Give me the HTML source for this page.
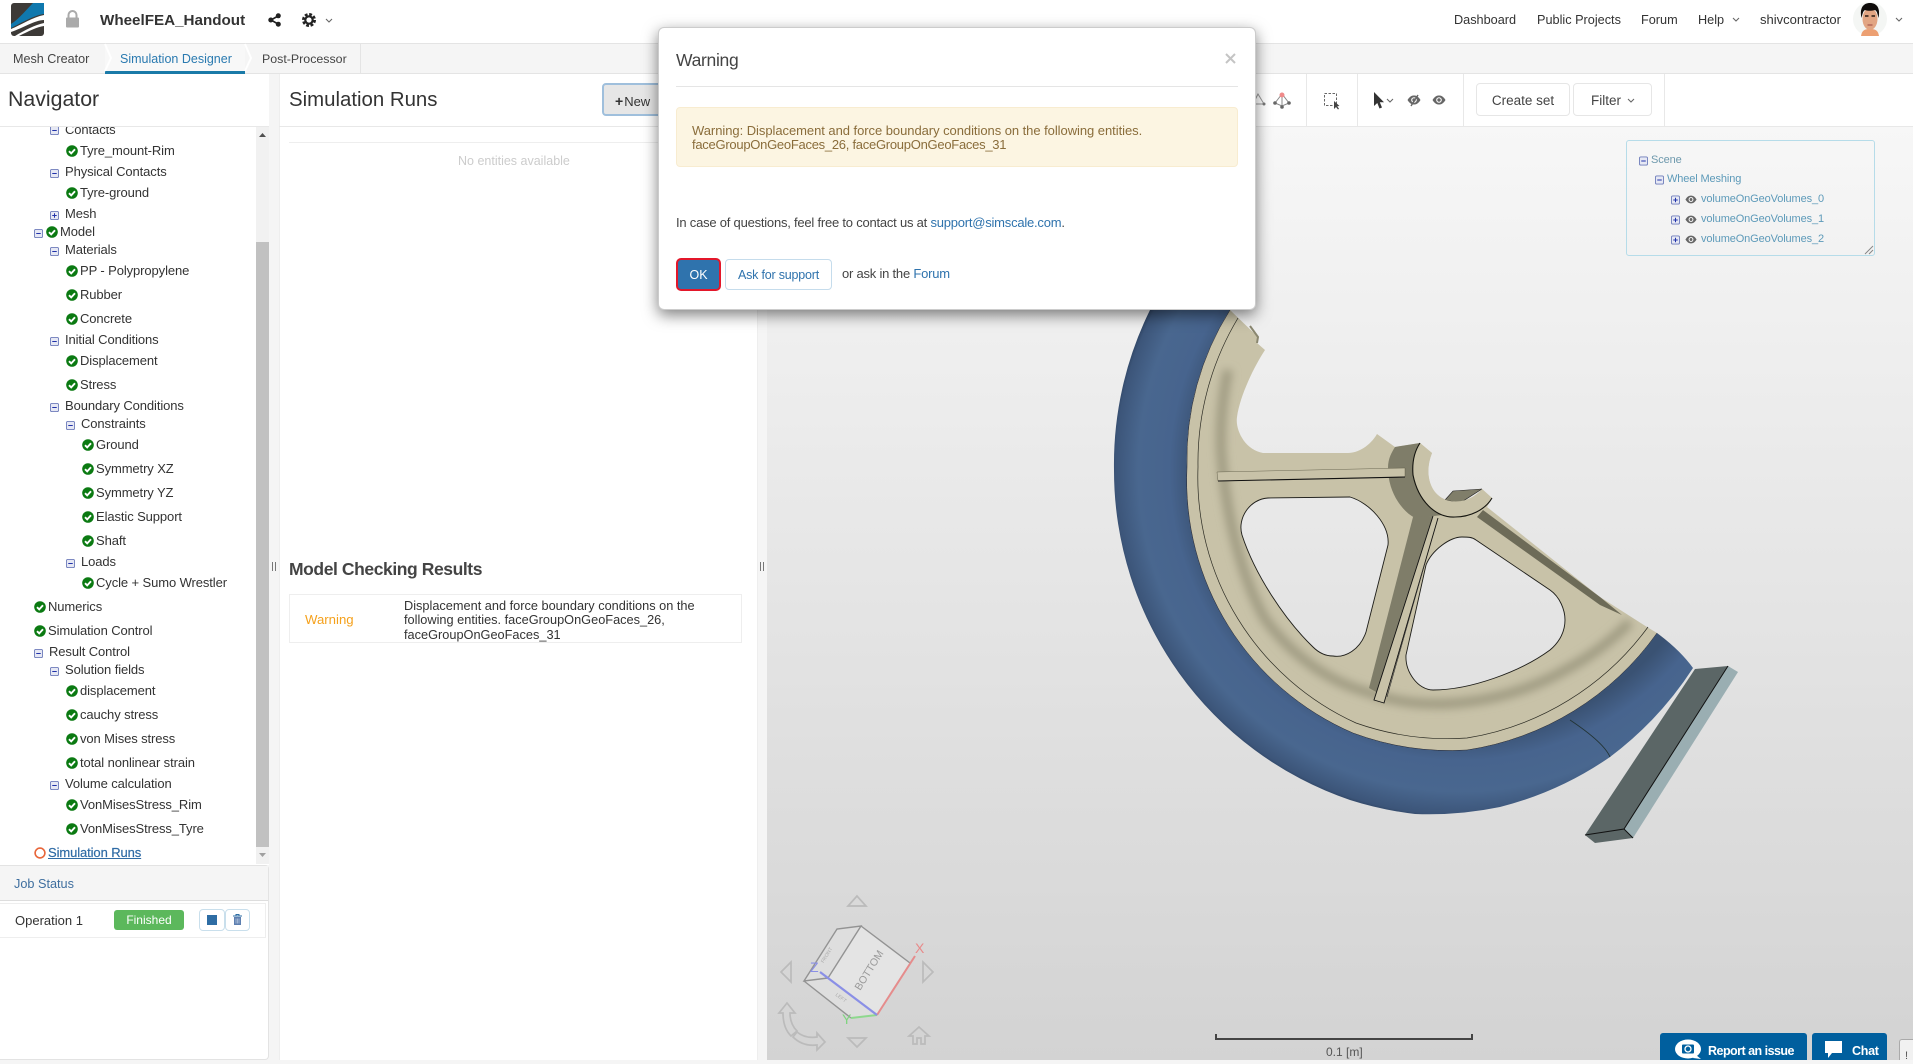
<!DOCTYPE html>
<html><head><meta charset="utf-8"><title>WheelFEA_Handout</title>
<style>
*{box-sizing:border-box}
html,body{margin:0;padding:0;width:1913px;height:1060px;overflow:hidden;background:#f5f5f5;font-family:"Liberation Sans",sans-serif;color:#333}
.b{position:absolute}
.t{position:absolute;white-space:nowrap;font-size:13.3px;line-height:16px;height:16px;margin-top:1px}
.tree .t{margin-top:0;font-size:13px;letter-spacing:-.1px}
.n{font-size:12.7px}
.m{font-size:13px;letter-spacing:-.22px}
.sc{font-size:11px;letter-spacing:-.12px}
a{color:#2f73ad;text-decoration:none}
svg.i{position:absolute;display:block;overflow:visible}
.bt{position:absolute;background:#fff;border:1px solid #e6e6e6;border-radius:4px;font-size:13.5px;text-align:center;line-height:33px;color:#444}
</style></head><body>
<svg width="0" height="0" style="position:absolute"><defs>
<symbol id="c" viewBox="0 0 12 12"><circle cx="6" cy="6" r="5.8" fill="#0b7a12"/><path d="M3 6.2 5.2 8.4 9 4.2" fill="none" stroke="#fff" stroke-width="1.9"/></symbol>
<symbol id="mn" viewBox="0 0 10 10"><rect x=".5" y=".5" width="9" height="9" rx="1.5" fill="#e6e8f4" stroke="#6f7dbb"/><path d="M2.5 5h5" stroke="#2233aa" stroke-width="1.1"/></symbol>
<symbol id="pl" viewBox="0 0 10 10"><rect x=".5" y=".5" width="9" height="9" rx="1.5" fill="#e6e8f4" stroke="#6f7dbb"/><path d="M2.5 5h5M5 2.5v5" stroke="#2233aa" stroke-width="1.1"/></symbol>
<symbol id="ch" viewBox="0 0 8 5"><path d="M1 1 4 4 7 1" fill="none" stroke="#666" stroke-width="1.1"/></symbol>
<symbol id="ey" viewBox="0 0 14 10"><path d="M.5 5C3 1 5 .5 7 .5S11 1 13.5 5C11 9 9 9.500 7 9.500S3 9 .5 5Z" fill="#666"/><circle cx="7" cy="5" r="2.800" fill="#fff"/><circle cx="7" cy="5" r="1.700" fill="#666"/></symbol>
<radialGradient id="ty" gradientUnits="userSpaceOnUse" cx="1460" cy="470" r="350"><stop offset=".76" stop-color="#3a5273"/><stop offset=".83" stop-color="#47648e"/><stop offset=".92" stop-color="#49678f"/><stop offset=".985" stop-color="#3c5579"/><stop offset="1" stop-color="#2d4260"/></radialGradient>
<clipPath id="rc"><path clip-rule="evenodd" d="M1230 310A280 280 0 0 0 1187 467A275 275 0 0 0 1353 733A280 280 0 0 0 1467 750A285 285 0 0 0 1657 633L1647 627 1600 597 1487 507 1492 498 1482 489C1470 503 1452 504 1442 498 1428 490 1425 470 1432 453L1420 443 1395 447 1377 434C1370 446 1358 453 1348 453L1263 453C1245 450 1235 430 1237 417 1240 395 1255 365 1265 350L1257 343 1258 337ZM1268 498L1350 497C1370 503 1390 525 1388 545L1366 632C1360 650 1345 658 1333 656 1325 656 1318 652 1313 647 1285 620 1255 575 1242 535 1237 518 1250 499 1268 498ZM1462 537C1468 537 1472 537 1476 540L1550 590C1560 597 1565 610 1565 620 1565 635 1556 645 1550 650 1520 672 1470 690 1433 690 1418 690 1405 672 1406 655L1426 565C1432 550 1450 537 1462 537Z"/></clipPath>
<filter id="bl" x="-20%" y="-20%" width="140%" height="140%"><feGaussianBlur stdDeviation="4.500"/></filter>
</defs></svg>

<!-- top bar -->
<div class="b" style="left:0;top:0;width:1913px;height:44px;background:#fff;border-bottom:1px solid #e4e4e4"></div>
<svg class="i" style="left:11px;top:3px" width="34" height="33" viewBox="0 0 34 33"><rect width="33" height="33" rx="3" fill="#3d3a37"/><path d="M33 0H22C14 8 8 16 0 21V25C12 19 24 12 33 11Z" fill="#0f78ae"/><path d="M33 12C22 14 10 22 0 26V29C12 25 24 17 33 17Z" fill="#fff"/><path d="M33 20C24 22 14 27 4 33H8C18 28 26 24 33 23Z" fill="#fff"/></svg>
<svg class="i" style="left:65px;top:10px" width="15" height="18" viewBox="0 0 15 18"><path d="M3.500 8V5a4 4 0 0 1 8 0v3" fill="none" stroke="#aaa" stroke-width="2"/><rect x="1" y="7.500" width="13" height="10" rx="1" fill="#aaa"/></svg>
<div class="t" style="left:100px;top:12px;font-size:15.2px;font-weight:bold;color:#333">WheelFEA_Handout</div>
<svg class="i" style="left:268px;top:13px" width="13" height="14" viewBox="0 0 13 14"><path d="M10 3 3 7l7 4" fill="none" stroke="#222" stroke-width="1.600"/><circle cx="10.300" cy="2.800" r="2.500" fill="#222"/><circle cx="2.800" cy="7" r="2.500" fill="#222"/><circle cx="10.300" cy="11.200" r="2.500" fill="#222"/></svg>
<svg class="i" style="left:302px;top:13px" width="14" height="14" viewBox="0 0 14 14"><circle cx="7" cy="7" r="5.700" fill="none" stroke="#222" stroke-width="2.600" stroke-dasharray="2.800 1.680"/><circle cx="7" cy="7" r="3.700" fill="none" stroke="#222" stroke-width="2.200"/></svg>
<svg class="i" style="left:325px;top:18px" width="8" height="5"><use href="#ch"/></svg>
<div class="t n" style="left:1454px;top:11px">Dashboard</div>
<div class="t n" style="left:1537px;top:11px">Public Projects</div>
<div class="t n" style="left:1641px;top:11px">Forum</div>
<div class="t n" style="left:1698px;top:11px">Help</div>
<svg class="i" style="left:1732px;top:17px" width="8" height="5"><use href="#ch"/></svg>
<div class="t" style="left:1760px;top:11px;font-size:13px">shivcontractor</div>
<svg class="i" style="left:1853px;top:2px" width="34" height="34" viewBox="0 0 34 34"><circle cx="17" cy="17" r="17" fill="#f4f6f4"/><path d="M8 34c1-6 4-7 9-7s8 1 9 7Z" fill="#ec9f72"/><ellipse cx="17" cy="17" rx="7.500" ry="11" fill="#e2a583"/><path d="M8.500 16C6 4 12 1 17 1s11 3 8.500 15c-1-4-1.500-7-3.500-8-4 1-7 1-10 0-2 1-2.500 4-3.500 8Z" fill="#0f0c0b"/><path d="M12 14h3.500M18.500 14h3.500" stroke="#2a1c14" stroke-width="1.500"/><path d="M14.500 23h5" stroke="#a8584c" stroke-width="1.200"/></svg>
<svg class="i" style="left:1895px;top:17px" width="8" height="5"><use href="#ch"/></svg>

<!-- tabs -->
<div class="b" style="left:0;top:44px;width:1913px;height:30px;background:#f5f5f5;border-bottom:1px solid #e4e4e4"></div>
<div class="b" style="left:105px;top:44px;width:140px;height:30px;background:#f8f8f8;border-bottom:3px solid #1a7aa8"></div>
<svg class="i" style="left:100px;top:44px" width="270" height="30" viewBox="0 0 270 30"><path d="M5 0 11 14 5 27" fill="none" stroke="#fff" stroke-width="2"/><path d="M145 0 151 14 145 27" fill="none" stroke="#fff" stroke-width="2"/><path d="M260.500 0V30" stroke="#e4e4e4"/></svg>
<div class="t" style="left:13px;top:50px;font-size:12.6px;color:#444">Mesh Creator</div>
<div class="t" style="left:120px;top:50px;font-size:12.5px;color:#2a7ab0">Simulation Designer</div>
<div class="t" style="left:262px;top:50px;font-size:12.4px;color:#444">Post-Processor</div>

<!-- navigator -->
<div class="b" style="left:0;top:74px;width:269px;height:791px;background:#fff"></div>
<div class="b" style="left:0;top:126px;width:269px;height:1px;background:#e8e8e8"></div>
<div class="t" style="left:8px;top:86px;font-size:21.300px;line-height:24px;height:24px">Navigator</div>
<div class="b" style="left:256px;top:127px;width:13px;height:737px;background:#f1f1f1"></div>
<div class="b" style="left:256px;top:242px;width:13px;height:605px;background:#c1c1c1"></div>
<svg class="i" style="left:256px;top:127px" width="13" height="737" viewBox="0 0 13 737"><path d="M3 10h7L6.500 6Z" fill="#505050"/><path d="M3 726h7l-3.500 4Z" fill="#a0a0a0"/></svg>

<div class="b tree" style="left:0;top:1px;width:256px;height:863px;clip-path:inset(126px 0 0 0)">
<svg class="i" style="left:50px;top:125px" width="9" height="9"><use href="#mn"/></svg><div class="t" style="left:65px;top:121px">Contacts</div>
<svg class="i" style="left:66px;top:144px" width="12" height="12"><use href="#c"/></svg><div class="t" style="left:80px;top:142px">Tyre_mount-Rim</div>
<svg class="i" style="left:50px;top:168px" width="9" height="9"><use href="#mn"/></svg><div class="t" style="left:65px;top:163px">Physical Contacts</div>
<svg class="i" style="left:66px;top:186px" width="12" height="12"><use href="#c"/></svg><div class="t" style="left:80px;top:184px">Tyre-ground</div>
<svg class="i" style="left:50px;top:210px" width="9" height="9"><use href="#pl"/></svg><div class="t" style="left:65px;top:205px">Mesh</div>
<svg class="i" style="left:34px;top:228px" width="9" height="9"><use href="#mn"/></svg><svg class="i" style="left:46px;top:225px" width="12" height="12"><use href="#c"/></svg><div class="t" style="left:60px;top:223px">Model</div>
<svg class="i" style="left:50px;top:246px" width="9" height="9"><use href="#mn"/></svg><div class="t" style="left:65px;top:241px">Materials</div>
<svg class="i" style="left:66px;top:264px" width="12" height="12"><use href="#c"/></svg><div class="t" style="left:80px;top:262px">PP - Polypropylene</div>
<svg class="i" style="left:66px;top:288px" width="12" height="12"><use href="#c"/></svg><div class="t" style="left:80px;top:286px">Rubber</div>
<svg class="i" style="left:66px;top:312px" width="12" height="12"><use href="#c"/></svg><div class="t" style="left:80px;top:310px">Concrete</div>
<svg class="i" style="left:50px;top:336px" width="9" height="9"><use href="#mn"/></svg><div class="t" style="left:65px;top:331px">Initial Conditions</div>
<svg class="i" style="left:66px;top:354px" width="12" height="12"><use href="#c"/></svg><div class="t" style="left:80px;top:352px">Displacement</div>
<svg class="i" style="left:66px;top:378px" width="12" height="12"><use href="#c"/></svg><div class="t" style="left:80px;top:376px">Stress</div>
<svg class="i" style="left:50px;top:402px" width="9" height="9"><use href="#mn"/></svg><div class="t" style="left:65px;top:397px">Boundary Conditions</div>
<svg class="i" style="left:66px;top:420px" width="9" height="9"><use href="#mn"/></svg><div class="t" style="left:81px;top:415px">Constraints</div>
<svg class="i" style="left:82px;top:438px" width="12" height="12"><use href="#c"/></svg><div class="t" style="left:96px;top:436px">Ground</div>
<svg class="i" style="left:82px;top:462px" width="12" height="12"><use href="#c"/></svg><div class="t" style="left:96px;top:460px">Symmetry XZ</div>
<svg class="i" style="left:82px;top:486px" width="12" height="12"><use href="#c"/></svg><div class="t" style="left:96px;top:484px">Symmetry YZ</div>
<svg class="i" style="left:82px;top:510px" width="12" height="12"><use href="#c"/></svg><div class="t" style="left:96px;top:508px">Elastic Support</div>
<svg class="i" style="left:82px;top:534px" width="12" height="12"><use href="#c"/></svg><div class="t" style="left:96px;top:532px">Shaft</div>
<svg class="i" style="left:66px;top:558px" width="9" height="9"><use href="#mn"/></svg><div class="t" style="left:81px;top:553px">Loads</div>
<svg class="i" style="left:82px;top:576px" width="12" height="12"><use href="#c"/></svg><div class="t" style="left:96px;top:574px">Cycle + Sumo Wrestler</div>
<svg class="i" style="left:34px;top:600px" width="12" height="12"><use href="#c"/></svg><div class="t" style="left:48px;top:598px">Numerics</div>
<svg class="i" style="left:34px;top:624px" width="12" height="12"><use href="#c"/></svg><div class="t" style="left:48px;top:622px">Simulation Control</div>
<svg class="i" style="left:34px;top:648px" width="9" height="9"><use href="#mn"/></svg><div class="t" style="left:49px;top:643px">Result Control</div>
<svg class="i" style="left:50px;top:666px" width="9" height="9"><use href="#mn"/></svg><div class="t" style="left:65px;top:661px">Solution fields</div>
<svg class="i" style="left:66px;top:684px" width="12" height="12"><use href="#c"/></svg><div class="t" style="left:80px;top:682px">displacement</div>
<svg class="i" style="left:66px;top:708px" width="12" height="12"><use href="#c"/></svg><div class="t" style="left:80px;top:706px">cauchy stress</div>
<svg class="i" style="left:66px;top:732px" width="12" height="12"><use href="#c"/></svg><div class="t" style="left:80px;top:730px">von Mises stress</div>
<svg class="i" style="left:66px;top:756px" width="12" height="12"><use href="#c"/></svg><div class="t" style="left:80px;top:754px">total nonlinear strain</div>
<svg class="i" style="left:50px;top:780px" width="9" height="9"><use href="#mn"/></svg><div class="t" style="left:65px;top:775px">Volume calculation</div>
<svg class="i" style="left:66px;top:798px" width="12" height="12"><use href="#c"/></svg><div class="t" style="left:80px;top:796px">VonMisesStress_Rim</div>
<svg class="i" style="left:66px;top:822px" width="12" height="12"><use href="#c"/></svg><div class="t" style="left:80px;top:820px">VonMisesStress_Tyre</div>
<svg class="i" style="left:34px;top:846px" width="12" height="12"><circle cx="6" cy="6" r="4.900" fill="none" stroke="#e8663a" stroke-width="1.600"/></svg><div class="t" style="left:45px;top:844px;padding-left:3px;color:#2f6ba5;text-decoration:underline;-webkit-text-stroke:.2px #2f6ba5">Simulation Runs</div>
</div>

<!-- job status -->
<div class="b" style="left:0;top:865px;width:269px;height:195px;background:#fff;border:1px solid #e3e3e3;border-left:0;border-radius:0 4px 4px 0"></div>
<div class="b" style="left:0;top:866px;width:268px;height:35px;background:#f5f5f5;border-bottom:1px solid #ddd"></div>
<div class="t" style="left:14px;top:875px;font-size:12.7px;color:#3f6f9f">Job Status</div>
<div class="b" style="left:0;top:903px;width:266px;height:35px;border:1px solid #eee;border-left:0"></div>
<div class="t" style="left:15px;top:912px;font-size:13px">Operation 1</div>
<div class="b" style="left:114px;top:910px;width:70px;height:20px;background:#5cb85c;border-radius:3px;color:#fff;font-size:12px;text-align:center;line-height:21px">Finished</div>
<div class="b" style="left:199px;top:909px;width:26px;height:22px;border:1px solid #c9dfec;border-radius:4px"></div>
<div class="b" style="left:225px;top:909px;width:25px;height:22px;border:1px solid #c9dfec;border-radius:4px"></div>
<div class="b" style="left:207px;top:915px;width:10px;height:10px;background:#2e6da4"></div>
<svg class="i" style="left:233px;top:914px" width="9" height="11" viewBox="0 0 9 11"><path d="M0 2h9M3 2V.5h3V2" fill="none" stroke="#2e6da4"/><path d="M1 3h7v8H1Z" fill="#5d7fb0"/><path d="M3 4.500V9.500M4.500 4.500V9.500M6 4.500V9.500" stroke="#cdd8e8" stroke-width=".6"/></svg>

<!-- splitter handles -->
<div class="b" style="left:272px;top:562px;width:4px;height:9px;border-left:1px solid #777;border-right:1px solid #777"></div>
<div class="b" style="left:760px;top:562px;width:4px;height:9px;border-left:1px solid #777;border-right:1px solid #777"></div>

<!-- center panel -->
<div class="b" style="left:279px;top:74px;width:479px;height:986px;background:#fff;border-left:1px solid #eee;border-right:1px solid #eee"></div>
<div class="b" style="left:279px;top:126px;width:479px;height:1px;background:#e8e8e8"></div>
<div class="t" style="left:289px;top:87px;font-size:20.400px;line-height:24px;height:24px">Simulation Runs</div>
<div class="b" style="left:602px;top:83px;width:70px;height:33px;background:#e6e6e6;border:2px solid #9fbfdc;border-radius:4px"></div>
<div class="t" style="left:615px;top:92px;font-size:13px"><b style="font-size:14px;margin-right:1px">+</b>New</div>
<div class="b" style="left:289px;top:142px;width:454px;height:1px;background:#eee"></div>
<div class="t" style="left:458px;top:152px;font-size:12.5px;color:#ccc">No entities available</div>
<div class="t" style="left:289px;top:558px;font-size:17.500px;line-height:20px;height:20px;font-weight:bold;color:#444;letter-spacing:-.42px">Model Checking Results</div>
<div class="b" style="left:289px;top:594px;width:453px;height:49px;border:1.500px solid #eee"></div>
<div class="t" style="left:305px;top:611px;font-size:13.200px;color:#f5a11c">Warning</div>
<div class="t" style="left:404px;top:597px;font-size:12.750px">Displacement and force boundary conditions on the</div>
<div class="t" style="left:404px;top:611px;font-size:12.750px">following entities. faceGroupOnGeoFaces_26,</div>
<div class="t" style="left:404px;top:626px;font-size:12.750px">faceGroupOnGeoFaces_31</div>

<!-- viewer -->
<div class="b" style="left:767px;top:126px;width:1146px;height:934px;background:linear-gradient(#f7f7f7,#d3d3d3)"></div>
<div class="b" style="left:767px;top:74px;width:1146px;height:53px;background:#fff;border-bottom:1px solid #e8e8e8"></div>
<div class="b" style="left:1306px;top:74px;width:1px;height:52px;background:#e8e8e8"></div>
<div class="b" style="left:1357px;top:74px;width:1px;height:52px;background:#e8e8e8"></div>
<div class="b" style="left:1463px;top:74px;width:1px;height:52px;background:#e8e8e8"></div>
<div class="b" style="left:1664px;top:74px;width:1px;height:52px;background:#e8e8e8"></div>
<svg class="i" style="left:1250px;top:90px" width="40" height="20" viewBox="0 0 40 20"><path d="M8 4 3 14H14Z" fill="none" stroke="#999"/><circle cx="14" cy="14" r="1.500" fill="#777"/><path d="M32 4 25 13 32 16 39 13Z M32 4V16" fill="none" stroke="#888"/><circle cx="32" cy="5" r="2.500" fill="#f08a8a"/><circle cx="25" cy="13" r="1.800" fill="#666"/><circle cx="39" cy="13" r="1.800" fill="#666"/><circle cx="32" cy="17" r="1.800" fill="#666"/></svg>
<svg class="i" style="left:1324px;top:92px" width="16" height="18" viewBox="0 0 16 18"><rect x=".5" y="1.500" width="12" height="12" fill="none" stroke="#666" stroke-dasharray="2.500 1.500"/><path d="M10 9v8l2-2 2 2.500 1-.7-1.800-2.500 2.300-.3Z" fill="#444"/></svg>
<svg class="i" style="left:1374px;top:92px" width="10" height="17" viewBox="0 0 10 17"><path d="M0 0V14L3.300 11 5.500 16.500 8 15.500 5.800 10.300H10Z" fill="#333"/></svg>
<svg class="i" style="left:1386px;top:98px" width="8" height="5"><use href="#ch"/></svg>
<svg class="i" style="left:1407px;top:95px" width="14" height="10"><use href="#ey"/><path d="M11 0 4 11" stroke="#666" stroke-width="1.400"/></svg>
<svg class="i" style="left:1432px;top:95px" width="14" height="10"><use href="#ey"/></svg>
<div class="bt" style="left:1476px;top:83px;width:94px;height:33px">Create set</div>
<div class="bt" style="left:1573px;top:83px;width:79px;height:33px;padding-right:13px">Filter</div>
<svg class="i" style="left:1627px;top:98px" width="8" height="5"><use href="#ch"/></svg>

<!-- 3D -->
<svg class="i" style="left:0;top:0" width="1913" height="1060" viewBox="0 0 1913 1060">
<path d="M1695 669 1728 666 1624 829 1585 835Z" fill="#5b6666"/>
<path d="M1728 666 1738 672 1633 838 1624 829Z" fill="#9aaeb2"/>
<path d="M1585 835 1624 829 1633 838 1595 843Z" fill="#5b6666"/>
<path d="M1728 666 1624 829 1585 835M1624 829 1633 838" fill="none" stroke="#111"/>
<path d="M1150 310A348 348 0 0 0 1114 470 348 348 0 0 0 1350 800 348 348 0 0 0 1415 814 350 350 0 0 0 1500 807 340 340 0 0 0 1610 757 345 345 0 0 0 1693 668Q1680 650 1657 633A285 285 0 0 1 1467 750 280 280 0 0 1 1353 733 275 275 0 0 1 1187 467 280 280 0 0 1 1230 310Z" fill="url(#ty)"/>
<path d="M1570 720C1585 730 1605 745 1610 757" fill="none" stroke="#233" stroke-width=".8"/>
<path fill-rule="evenodd" fill="#c8c2a8" d="M1230 310A280 280 0 0 0 1187 467A275 275 0 0 0 1353 733A280 280 0 0 0 1467 750A285 285 0 0 0 1657 633L1647 627 1600 597 1487 507 1492 498 1482 489C1470 503 1452 504 1442 498 1428 490 1425 470 1432 453L1420 443 1395 447 1377 434C1370 446 1358 453 1348 453L1263 453C1245 450 1235 430 1237 417 1240 395 1255 365 1265 350L1257 343 1258 337ZM1268 498L1350 497C1370 503 1390 525 1388 545L1366 632C1360 650 1345 658 1333 656 1325 656 1318 652 1313 647 1285 620 1255 575 1242 535 1237 518 1250 499 1268 498ZM1462 537C1468 537 1472 537 1476 540L1550 590C1560 597 1565 610 1565 620 1565 635 1556 645 1550 650 1520 672 1470 690 1433 690 1418 690 1405 672 1406 655L1426 565C1432 550 1450 537 1462 537Z"/>
<g clip-path="url(#rc)"><path d="M1228 370C1222 400 1220 425 1221 450 1226 520 1243 580 1265 619 1293 657 1330 682 1367 692 1400 704 1435 706 1467 702 1510 697 1545 682 1567 669 1590 657 1610 642 1630 622" fill="none" stroke="#9c987f" stroke-width="9" filter="url(#bl)"/></g>
<path d="M1268 498L1350 497C1370 503 1390 525 1388 545L1366 632C1360 650 1345 658 1333 656 1325 656 1318 652 1313 647 1285 620 1255 575 1242 535 1237 518 1250 499 1268 498Z" fill="none" stroke="#1c1c18" stroke-width=".9"/>
<path d="M1462 537C1468 537 1472 537 1476 540L1550 590C1560 597 1565 610 1565 620 1565 635 1556 645 1550 650 1520 672 1470 690 1433 690 1418 690 1405 672 1406 655L1426 565C1432 550 1450 537 1462 537Z" fill="none" stroke="#1c1c18" stroke-width=".9"/>
<path d="M1238 318A280 280 0 0 0 1198 467 270 270 0 0 0 1356 723 275 275 0 0 0 1467 738 280 280 0 0 0 1648 627" fill="none" stroke="#2a2a22" stroke-width=".7"/>
<path d="M1230 310A280 280 0 0 0 1187 467A275 275 0 0 0 1353 733A280 280 0 0 0 1467 750A285 285 0 0 0 1657 633" fill="none" stroke="#23232a" stroke-width=".5"/>
<path d="M1395 447 1420 443 1413 475 1443 515 1415 518C1400 510 1388 490 1388 468 1388 458 1392 452 1395 447Z" fill="#7f7d69"/>
<path d="M1413 517 1433 516 1378 693 1369 688Z" fill="#7f7d69"/>
<path d="M1433 516 1438 518 1384 703 1374 700Z" fill="#c8c2a8"/>
<path d="M1433 516 1374 700 1384 703 1438 518" fill="none" stroke="#111" stroke-width=".9"/>
<path d="M1425 563 1387 697" stroke="#333" stroke-width=".6" fill="none"/>
<path d="M1445 500 1453 491 1482 489 1460 503Z" fill="#807e6a" stroke="#222" stroke-width=".6"/>
<path d="M1420 443 1432 453C1425 470 1428 490 1442 498 1452 504 1470 503 1482 489L1492 498C1485 510 1470 517 1455 517 1435 518 1418 500 1413 475 1412 463 1414 452 1420 443Z" fill="#c8c2a8"/>
<path d="M1420 443C1414 452 1412 463 1413 475 1418 500 1435 518 1455 517 1470 517 1485 510 1492 498" fill="none" stroke="#14140f" stroke-width="1.100"/>
<path d="M1217 472 1405 468 1405 477 1218 481Z" fill="#c8c2a8" stroke="#55533f" stroke-width=".4"/>
<path d="M1218 481 1405 477" stroke="#111" stroke-width="1.100" fill="none"/>
<path d="M1483 510 1600 597 1622 615 1600 605 1477 517Z" fill="#6d6b58"/>
<path d="M1250 326 1258 337 1257 343" fill="none" stroke="#8a876f" stroke-width="2"/>
</svg>

<!-- scene tree -->
<div class="b" style="left:1626px;top:140px;width:249px;height:116px;border:1px solid #b6dce9;border-radius:3px"></div>
<svg class="i" style="left:1864px;top:245px" width="10" height="10"><path d="M1 9 9 1M5 9 9 5" stroke="#888"/></svg>
<svg class="i" style="left:1639px;top:156px" width="9" height="10"><use href="#mn"/></svg><div class="t sc" style="left:1651px;top:151px;color:#6e99ad">Scene</div>
<svg class="i" style="left:1655px;top:175px" width="9" height="10"><use href="#mn"/></svg><div class="t sc" style="left:1667px;top:170px;color:#5d9ab9">Wheel Meshing</div>
<svg class="i" style="left:1671px;top:195px" width="9" height="10"><use href="#pl"/></svg><svg class="i" style="left:1685px;top:195px" width="12" height="9"><use href="#ey"/></svg><div class="t sc" style="left:1701px;top:190px;color:#5d9ab9">volumeOnGeoVolumes_0</div>
<svg class="i" style="left:1671px;top:215px" width="9" height="10"><use href="#pl"/></svg><svg class="i" style="left:1685px;top:215px" width="12" height="9"><use href="#ey"/></svg><div class="t sc" style="left:1701px;top:210px;color:#5d9ab9">volumeOnGeoVolumes_1</div>
<svg class="i" style="left:1671px;top:235px" width="9" height="10"><use href="#pl"/></svg><svg class="i" style="left:1685px;top:235px" width="12" height="9"><use href="#ey"/></svg><div class="t sc" style="left:1701px;top:230px;color:#5d9ab9">volumeOnGeoVolumes_2</div>

<!-- gizmo -->
<svg class="i" style="left:0;top:0" width="1913" height="1060" viewBox="0 0 1913 1060" font-family="Liberation Sans,sans-serif">
<path d="M861 926 910 963 877 1015 828 978Z" fill="#e4e4e4"/>
<path d="M861 926 837 929 804 981 828 978Z" fill="#dedede"/>
<path d="M804 981 828 978 877 1015 851 1018Z" fill="#dedede"/>
<path d="M828 978 861 926 837 929 804 981 828 978M861 926 910 963M804 981 851 1018" fill="none" stroke="#939393" stroke-width="1.400"/>
<path d="M877 1015 915 956" stroke="#e58c8c" stroke-width="2"/><path d="M877 1015 851 1018" stroke="#8ed88e" stroke-width="2"/><path d="M877 1015 820 972" stroke="#8a8fe6" stroke-width="2.200"/>
<text x="915" y="953" font-size="14" fill="#e88a8a">X</text>
<text x="842" y="1024" font-size="14" fill="#7fd47f">Y</text>
<text x="810" y="972" font-size="14" fill="#8a8fe6">Z</text>
<text x="0" y="0" font-size="10.500" fill="#999" text-anchor="middle" transform="translate(872,972) rotate(-58)">BOTTOM</text>
<text x="0" y="0" font-size="5" fill="#aaa" text-anchor="middle" transform="translate(828,956) rotate(-58)">FRONT</text>
<text x="0" y="0" font-size="5" fill="#aaa" text-anchor="middle" transform="translate(840,999) rotate(37)">LEFT</text>
<g fill="none" stroke="#bbb" stroke-width="1.700">
<path d="M857 896 848 906H866Z"/><path d="M857 1047 848 1038H866Z"/><path d="M781 972 791 962V982Z"/><path d="M933 972 923 962V982Z"/>
<path d="M919 1027 909 1036H913V1044H917V1038H921V1044H925V1036H929Z"/>
<path d="M787 1003 779 1013H783C783 1022 785 1030 791 1036L797 1031C792 1026 790 1020 790 1013H795Z"/>
<path d="M793 1037 797 1032C803 1037 810 1038 817 1037V1033L825 1042 817 1050V1045C808 1046 800 1044 793 1037Z"/>
</g></svg>

<!-- scale -->
<div class="b" style="left:1215px;top:1034px;width:258px;height:6px;border:2px solid #444;border-top:0"></div>
<div class="t" style="left:1326px;top:1043px;font-size:12px;color:#555">0.1 [m]</div>

<!-- bottom buttons -->
<div class="b" style="left:1660px;top:1033px;width:147px;height:27px;background:#005f9e;border-radius:3px 3px 0 0"></div>
<svg class="i" style="left:1675px;top:1039px" width="27" height="21" viewBox="0 0 27 21"><ellipse cx="13" cy="10" rx="13" ry="9.500" fill="#fff"/><path d="M21 16l5 4-8-1Z" fill="#fff"/><rect x="7" y="5.500" width="12" height="9" rx="1" fill="#005f9e"/><circle cx="13" cy="10" r="3" fill="none" stroke="#fff" stroke-width="1.300"/></svg>
<div class="t" style="left:1708px;top:1042px;font-size:12.5px;font-weight:bold;color:#fff;letter-spacing:-.52px">Report an issue</div>
<div class="b" style="left:1812px;top:1033px;width:75px;height:27px;background:#005f9e;border-radius:3px 3px 0 0"></div>
<svg class="i" style="left:1825px;top:1041px" width="18" height="18" viewBox="0 0 18 18"><path d="M0 0H17V12H7L3 17V12H0Z" fill="#fff"/></svg>
<div class="t" style="left:1852px;top:1042px;font-size:12.5px;font-weight:bold;color:#fff;letter-spacing:-.3px">Chat</div>
<div class="b" style="left:1899px;top:1039px;width:14px;height:21px;background:#f1f1f1;border:1px solid #aaa;border-right:0;border-bottom:0;border-radius:3px 0 0 0"></div>
<div class="t" style="left:1905px;top:1047px;font-size:11px;color:#555">!</div>

<!-- modal -->
<div class="b" style="left:658px;top:27px;width:598px;height:283px;background:#fff;border:1px solid rgba(0,0,0,.2);border-radius:6px;box-shadow:0 5px 15px rgba(0,0,0,.5)"></div>
<div class="t" style="left:676px;top:48px;font-size:17.500px;line-height:22px;height:22px;color:#444;letter-spacing:-.3px">Warning</div>
<svg class="i" style="left:1225px;top:53px" width="11" height="11"><path d="M1 1 10 10M10 1 1 10" stroke="#c4c4c4" stroke-width="2"/></svg>
<div class="b" style="left:676px;top:86px;width:562px;height:1px;background:#e5e5e5"></div>
<div class="b" style="left:676px;top:107px;width:562px;height:60px;background:#fcf5e2;border:1px solid #f8ecd0;border-radius:4px"></div>
<div class="t m" style="left:692px;top:122px;color:#8a6d3b;letter-spacing:-.05px">Warning: Displacement and force boundary conditions on the following entities.</div>
<div class="t m" style="left:692px;top:136px;color:#8a6d3b;letter-spacing:-.27px">faceGroupOnGeoFaces_26, faceGroupOnGeoFaces_31</div>
<div class="t m" style="left:676px;top:214px;color:#444">In case of questions, feel free to contact us at <a href="#">support@simscale.com</a>.</div>
<div class="b" style="left:676px;top:258px;width:45px;height:33px;background:#2f73ad;border:2px solid #e3172a;border-radius:5px;color:#fff;font-size:12.5px;text-align:center;line-height:31px">OK</div>
<div class="b" style="left:725px;top:259px;width:107px;height:31px;background:#fff;border:1px solid #c5dcec;border-radius:4px;color:#2f73ad;font-size:12.5px;text-align:center;line-height:31px;letter-spacing:-.2px">Ask for support</div>
<div class="t m" style="left:842px;top:265px;color:#444">or ask in the <a href="#">Forum</a></div>
</body></html>
